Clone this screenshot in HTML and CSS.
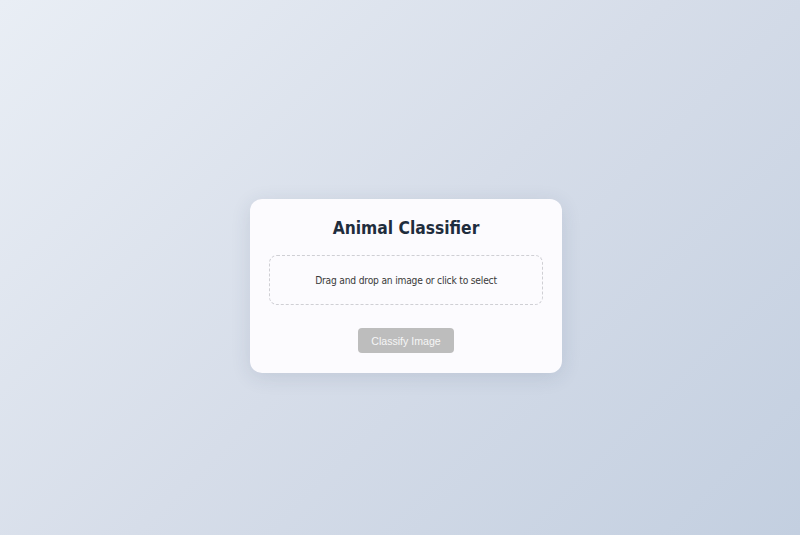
FILE: index.html
```html
<!DOCTYPE html>
<html lang="en">
<head>
<meta charset="utf-8">
<title>Animal Classifier</title>
<link rel="stylesheet" href="styles.css">
</head>
<body>
<main class="page">
  <section class="card">
    <h1 class="title">Animal Classifier</h1>
    <div class="dropzone">Drag and drop an image or click to select</div>
    <button class="btn" disabled>Classify Image</button>
  </section>
</main>
</body>
</html>
```

FILE: styles.css
```css
html, body {
  margin: 0;
  padding: 0;
}
body {
  background: linear-gradient(135deg, #e9eef5 0%, #d6dde9 50%, #c3cfe0 100%);
  min-height: 100vh;
  font-family: "DejaVu Sans Condensed", "DejaVu Sans", Verdana, sans-serif;
}
.page {
  min-height: 100vh;
  box-sizing: border-box;
  padding: 37px 0 0 12px;
  display: flex;
  align-items: center;
  justify-content: center;
}
.card {
  width: 312px;
  box-sizing: border-box;
  background: #fcfbfe;
  border-radius: 12px;
  box-shadow: 0 4px 20px rgba(40, 60, 90, 0.12);
  padding: 16px 19px 20px;
  display: flex;
  flex-direction: column;
  align-items: center;
}
.title {
  margin: 0 0 14px;
  font-size: 17.3px;
  font-weight: bold;
  color: #1f2d3d;
  line-height: 26px;
}
.dropzone {
  align-self: stretch;
  height: 50px;
  box-sizing: border-box;
  border: 1.5px dashed #cfcfd4;
  border-radius: 8px;
  display: flex;
  align-items: center;
  justify-content: center;
  font-size: 10.2px;
  letter-spacing: -0.2px;
  color: #3a3a3a;
  margin-bottom: 23px;
}
.btn {
  width: 96px;
  height: 25px;
  border: none;
  border-radius: 4px;
  background: #bdbdbd;
  color: #f6f6f6;
  font-family: "Liberation Sans", Arial, sans-serif;
  font-size: 10.6px;
  padding: 0;
}
```
